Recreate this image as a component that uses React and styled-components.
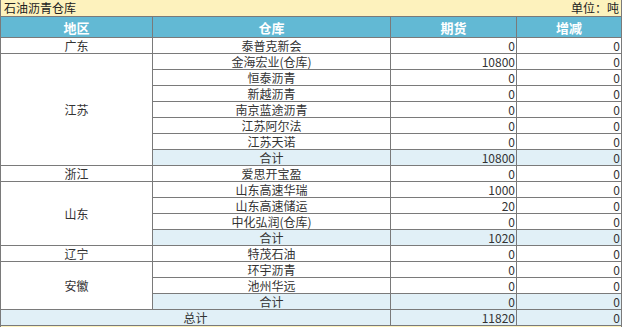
import React from 'react';
import styled, { createGlobalStyle } from 'styled-components';

const GlobalStyle = createGlobalStyle`
  body {
    margin: 0;
    background: #fff;
    font-family: "Noto Sans CJK SC", "Liberation Sans", sans-serif;
  }
`;

const regions = [
  {
    name: '广东',
    rows: [{ store: '泰普克新会', futures: 0, change: 0 }],
  },
  {
    name: '江苏',
    rows: [
      { store: '金海宏业(仓库)', futures: 10800, change: 0 },
      { store: '恒泰沥青', futures: 0, change: 0 },
      { store: '新越沥青', futures: 0, change: 0 },
      { store: '南京蓝途沥青', futures: 0, change: 0 },
      { store: '江苏阿尔法', futures: 0, change: 0 },
      { store: '江苏天诺', futures: 0, change: 0 },
    ],
    total: { futures: 10800, change: 0 },
  },
  {
    name: '浙江',
    rows: [{ store: '爱思开宝盈', futures: 0, change: 0 }],
  },
  {
    name: '山东',
    rows: [
      { store: '山东高速华瑞', futures: 1000, change: 0 },
      { store: '山东高速储运', futures: 20, change: 0 },
      { store: '中化弘润(仓库)', futures: 0, change: 0 },
    ],
    total: { futures: 1020, change: 0 },
  },
  {
    name: '辽宁',
    rows: [{ store: '特茂石油', futures: 0, change: 0 }],
  },
  {
    name: '安徽',
    rows: [
      { store: '环宇沥青', futures: 0, change: 0 },
      { store: '池州华远', futures: 0, change: 0 },
    ],
    total: { futures: 0, change: 0 },
  },
];

const App = () => {
  return (
    <Wrapper>
      <GlobalStyle />
      <TitleBar>
        <span>石油沥青仓库</span>
        <span>单位：吨</span>
      </TitleBar>
      <Table>
        <colgroup>
          <col style={{ width: 152 }} />
          <col style={{ width: 238 }} />
          <col style={{ width: 126 }} />
          <col />
        </colgroup>
        <thead>
          <tr>
            <HeadCell>地区</HeadCell>
            <HeadCell>仓库</HeadCell>
            <HeadCell>期货</HeadCell>
            <HeadCell>增减</HeadCell>
          </tr>
        </thead>
        <tbody>
          {regions.map((region) => {
            const span = region.rows.length + (region.total ? 1 : 0);
            return (
              <React.Fragment key={region.name}>
                {region.rows.map((row, i) => (
                  <tr key={row.store}>
                    {i === 0 && <Cell rowSpan={span}>{region.name}</Cell>}
                    <Cell>{row.store}</Cell>
                    <NumCell>{row.futures}</NumCell>
                    <NumCell>{row.change}</NumCell>
                  </tr>
                ))}
                {region.total && (
                  <tr>
                    <Cell $sum>合计</Cell>
                    <NumCell $sum>{region.total.futures}</NumCell>
                    <NumCell $sum>{region.total.change}</NumCell>
                  </tr>
                )}
              </React.Fragment>
            );
          })}
          <tr>
            <Cell $sum colSpan={2}>总计</Cell>
            <NumCell $sum>11820</NumCell>
            <NumCell $sum>0</NumCell>
          </tr>
        </tbody>
      </Table>
      <Footer />
    </Wrapper>
  );
};

export default App;

const Wrapper = styled.div`
  width: 622px;
  font-size: 12px;
  color: #333;
`;

const TitleBar = styled.div`
  display: flex;
  justify-content: space-between;
  align-items: center;
  height: 16px;
  padding: 0 2px 0 3px;
  background: #fdf2bd;
  border-left: 1px solid #7a7a7a;
  border-right: 1px solid #7a7a7a;
  font-size: 12px;
  line-height: 14px;
  color: #222;
`;

const Table = styled.table`
  width: 622px;
  border-collapse: collapse;
  table-layout: fixed;
`;

const HeadCell = styled.th`
  height: 20px;
  padding: 0;
  background: #62b9d4;
  border: 1px solid #7a7a7a;
  color: #fff;
  font-weight: bold;
  font-size: 13px;
  text-align: center;
`;

const Cell = styled.td`
  height: 15px;
  padding: 0;
  border: 1px solid #7a7a7a;
  background: ${(p) => (p.$sum ? '#e1f0f7' : '#fff')};
  text-align: center;
  line-height: 15px;
  white-space: nowrap;
`;

const NumCell = styled(Cell)`
  text-align: right;
  padding-right: 1px;
`;

const Footer = styled.div`
  height: 12px;
  background: #fdf2bd;
  border-left: 1px solid #7a7a7a;
  border-right: 1px solid #7a7a7a;
`;
